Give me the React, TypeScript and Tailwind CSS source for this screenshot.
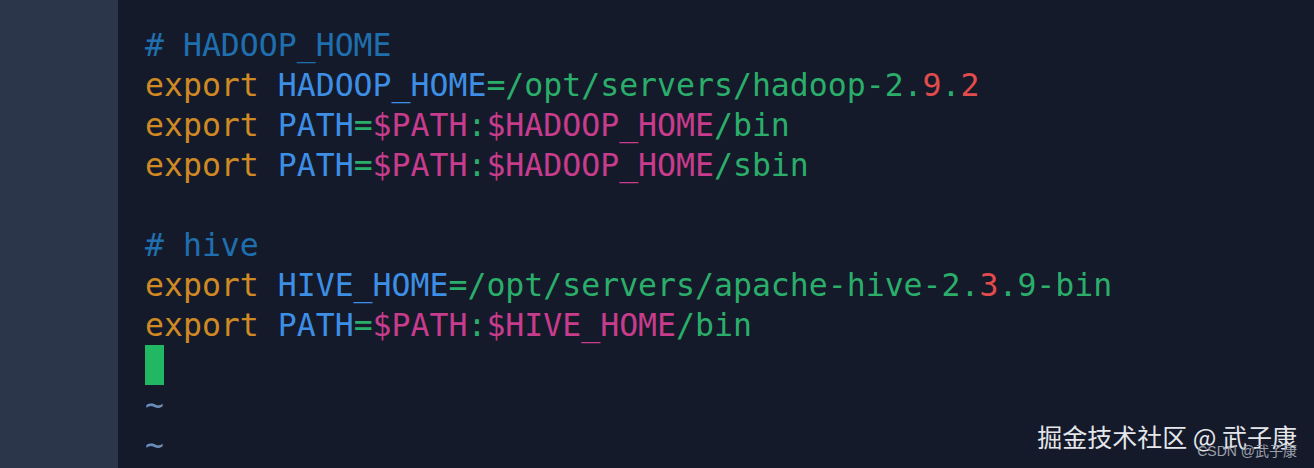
import React from 'react';

type Seg = [string, string];

const C = {
  comment: 'text-[#1f6fae]',
  kw: 'text-[#d08a24]',
  id: 'text-[#3d8fe6]',
  str: 'text-[#2aae6a]',
  var: 'text-[#c73c8c]',
  num: 'text-[#e24c4c]',
};

const lines: Seg[][] = [
  [[C.comment, '# HADOOP_HOME']],
  [
    [C.kw, 'export '],
    [C.id, 'HADOOP_HOME'],
    [C.str, '=/opt/servers/hadoop-2.'],
    [C.num, '9'],
    [C.str, '.'],
    [C.num, '2'],
  ],
  [
    [C.kw, 'export '],
    [C.id, 'PATH'],
    [C.str, '='],
    [C.var, '$PATH'],
    [C.str, ':'],
    [C.var, '$HADOOP_HOME'],
    [C.str, '/bin'],
  ],
  [
    [C.kw, 'export '],
    [C.id, 'PATH'],
    [C.str, '='],
    [C.var, '$PATH'],
    [C.str, ':'],
    [C.var, '$HADOOP_HOME'],
    [C.str, '/sbin'],
  ],
  [],
  [[C.comment, '# hive']],
  [
    [C.kw, 'export '],
    [C.id, 'HIVE_HOME'],
    [C.str, '=/opt/servers/apache-hive-2.'],
    [C.num, '3'],
    [C.str, '.9-bin'],
  ],
  [
    [C.kw, 'export '],
    [C.id, 'PATH'],
    [C.str, '='],
    [C.var, '$PATH'],
    [C.str, ':'],
    [C.var, '$HIVE_HOME'],
    [C.str, '/bin'],
  ],
];

export default function App() {
  return (
    <div className="w-[1314px] h-[468px] flex bg-[#151a2a] overflow-hidden">
      <div className="w-[118px] shrink-0 bg-[#2b364a]" />
      <div className="relative flex-1 pl-[27px] pt-[25px] font-['DejaVu_Sans_Mono',monospace] text-[31.5px] leading-[40px] whitespace-pre">
        {lines.map((segs, i) => (
          <div key={i} className="h-[40px]">
            {segs.map(([cls, t], j) => (
              <span key={j} className={cls}>{t}</span>
            ))}
          </div>
        ))}
        <div className="h-[40px] flex">
          <div className="w-[19px] h-[40px] bg-[#22b863]" />
        </div>
        <div className="h-[40px] text-[#6a8db6]">~</div>
        <div className="h-[40px] text-[#6a8db6]">~</div>

        {/* watermark, overlaps like the original */}
        <div className="absolute right-[17px] top-[420px] font-['Noto_Sans_CJK_SC',sans-serif] text-[25px] leading-[32px] text-[#e4e6ea] whitespace-nowrap">
          掘金技术社区 @ 武子康
        </div>
        <div className="absolute right-[17px] top-[443px] font-['Liberation_Sans','Noto_Sans_CJK_SC',sans-serif] text-[14px] leading-[16px] text-[#9aa0aa] whitespace-nowrap">
          CSDN @武子康
        </div>
      </div>
    </div>
  );
}
